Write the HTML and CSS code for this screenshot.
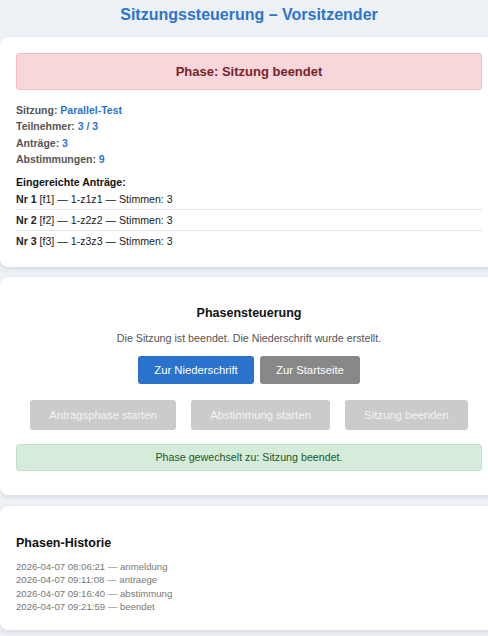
FILE: index.html
```html
<!DOCTYPE html>
<html lang="de">
<head>
<meta charset="utf-8">
<title>Sitzungssteuerung – Vorsitzender</title>
<link rel="stylesheet" href="styles.css">
</head>
<body>
<div class="page">
  <h1 class="title">Sitzungssteuerung – Vorsitzender</h1>

  <section class="card">
    <div class="phase-box">Phase: Sitzung beendet</div>
    <div class="info">
      <div class="info-line">Sitzung: <span class="val">Parallel-Test</span></div>
      <div class="info-line">Teilnehmer: <span class="val">3 / 3</span></div>
      <div class="info-line">Anträge: <span class="val">3</span></div>
      <div class="info-line">Abstimmungen: <span class="val">9</span></div>
    </div>
    <div class="list-title">Eingereichte Anträge:</div>
    <ul class="antraege">
      <li><b>Nr 1</b> [f1] — 1-z1z1 — Stimmen: 3</li>
      <li><b>Nr 2</b> [f2] — 1-z2z2 — Stimmen: 3</li>
      <li><b>Nr 3</b> [f3] — 1-z3z3 — Stimmen: 3</li>
    </ul>
  </section>

  <section class="card center">
    <h2 class="card-heading">Phasensteuerung</h2>
    <p class="sub">Die Sitzung ist beendet. Die Niederschrift wurde erstellt.</p>
    <div class="btn-row top-row">
      <button class="btn btn-primary">Zur Niederschrift</button>
      <button class="btn btn-secondary">Zur Startseite</button>
    </div>
    <div class="btn-row phase-row">
      <button class="btn btn-disabled w1" disabled>Antragsphase starten</button>
      <button class="btn btn-disabled w2" disabled>Abstimmung starten</button>
      <button class="btn btn-disabled w3" disabled>Sitzung beenden</button>
    </div>
    <div class="msg-ok">Phase gewechselt zu: Sitzung beendet.</div>
  </section>

  <section class="card">
    <h2 class="card-heading left">Phasen-Historie</h2>
    <div class="history">
      <div>2026-04-07 08:06:21 — anmeldung</div>
      <div>2026-04-07 09:11:08 — antraege</div>
      <div>2026-04-07 09:16:40 — abstimmung</div>
      <div>2026-04-07 09:21:59 — beendet</div>
    </div>
  </section>
</div>
</body>
</html>
```

FILE: styles.css
```css
html, body {
  margin: 0;
  padding: 0;
  overflow-x: hidden;
  background: #edf1f6;
  font-family: "Liberation Sans", Arial, sans-serif;
  color: #111;
}

.page {
  width: 498px;
  padding-bottom: 10px;
}

.title {
  margin: 0;
  padding: 6px 0 0;
  height: 31px;
  box-sizing: border-box;
  text-align: center;
  font-size: 16px;
  line-height: 18px;
  font-weight: bold;
  color: #2d74cf;
}

.card {
  background: #fff;
  border-radius: 8px;
  padding: 16px;
  margin-top: 10px;
  box-shadow: 0 2px 5px rgba(40, 60, 90, 0.12);
}

.card:first-of-type {
  margin-top: 6px;
}

.card:last-of-type {
  margin-top: 11px;
}

.center {
  text-align: center;
}

.phase-box {
  background: #f8d7da;
  border: 1px solid #f2bcc1;
  border-radius: 3px;
  color: #78232a;
  font-weight: bold;
  font-size: 13px;
  line-height: 15px;
  padding: 10px;
  text-align: center;
}

.info {
  margin-top: 12px;
}

.info-line {
  font-size: 10.5px;
  line-height: 16.3px;
  font-weight: bold;
  color: #555;
}

.val {
  color: #2d74cf;
}

.list-title {
  margin-top: 9px;
  font-size: 10.6px;
  line-height: 13px;
  font-weight: bold;
  color: #111;
}

.antraege {
  list-style: none;
  margin: 0;
  padding: 0;
}

.antraege li {
  font-size: 10.6px;
  line-height: 12px;
  padding: 4px 0;
  color: #222;
}

.antraege li + li {
  border-top: 1px solid #e7e7e7;
}

.card-heading {
  margin: 13px 0 0;
  font-size: 12.5px;
  line-height: 15px;
  font-weight: bold;
  color: #111;
}

.card-heading.left {
  text-align: left;
  margin-top: 14px;
}

.sub {
  margin: 11px 0 0;
  font-size: 10.7px;
  line-height: 13px;
  color: #555;
}

.btn-row {
  display: flex;
  justify-content: center;
}

.top-row {
  margin-top: 11px;
  gap: 6px;
}

.phase-row {
  margin-top: 16px;
  gap: 15px;
}

.btn {
  font-family: "Liberation Sans", Arial, sans-serif;
  font-size: 11.3px;
  border: none;
  border-radius: 3px;
  color: #fff;
  padding: 0 16px;
  height: 28px;
}

.btn-primary {
  background: #2b72cc;
  width: 116px;
}

.btn-secondary {
  background: #888;
  width: 100px;
}

.btn-disabled {
  background: #cbcbcb;
  color: #f3f3f3;
  height: 30px;
}

.w1 { width: 146px; }
.w2 { width: 139px; }
.w3 { width: 123px; }

.msg-ok {
  margin: 14px 0 8px;
  background: #d4ecd9;
  border: 1px solid #bfe2c7;
  border-radius: 3px;
  color: #1b5a2a;
  font-size: 10.7px;
  line-height: 13px;
  padding: 6px;
}

.history {
  margin-top: 9px;
  margin-bottom: 1px;
  font-size: 9.6px;
  line-height: 13.2px;
  color: #777;
}
```
